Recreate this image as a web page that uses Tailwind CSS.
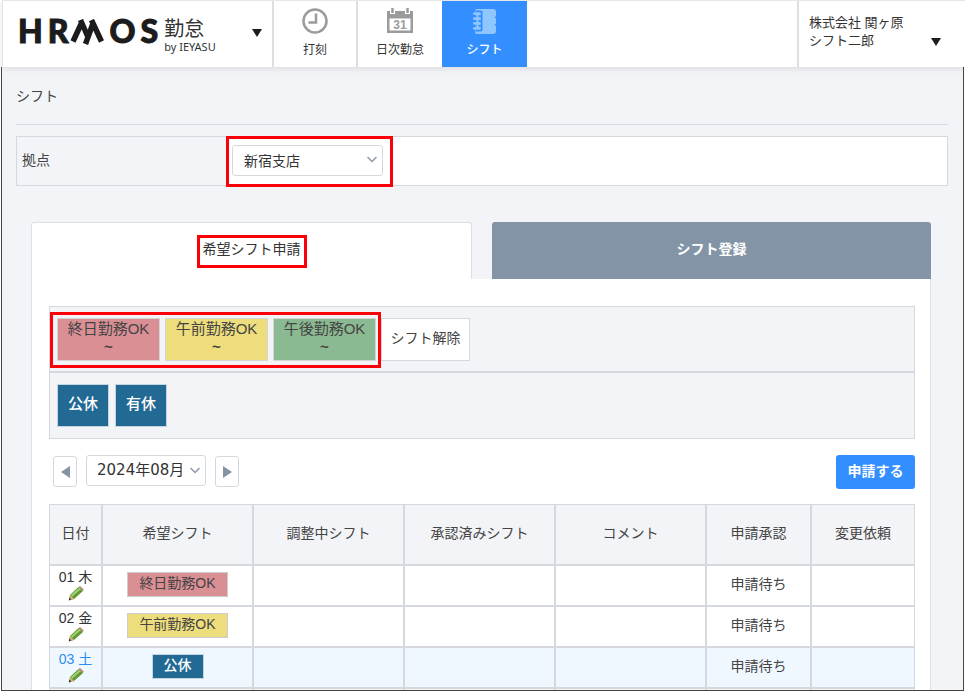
<!DOCTYPE html>
<html lang="ja">
<head>
<meta charset="utf-8">
<title>シフト</title>
<script src="https://cdn.jsdelivr.net/npm/@tailwindcss/browser@4"></script>
</head>
<body class="h-screen flex flex-col overflow-hidden bg-white pb-[2px] text-sm text-[#444] font-['Liberation_Sans','Noto_Sans_CJK_JP',sans-serif]">
<header class="relative z-10 flex h-[67px] shrink-0 ml-[2px] border-t border-l border-[#e6e6ea] bg-white shadow-[0_2px_6px_rgba(0,0,0,0.1)]">
  <div class="flex w-[271px] shrink-0 items-start border-r-2 border-[#dedee4] pl-[15px] pr-[10px]">
    <div class="flex pt-[12px] gap-[5px] text-[32px] leading-[36px] font-black text-[#1c1c1c] font-['Lato',sans-serif] [-webkit-text-stroke:1px_#1c1c1c]">
      <span>H</span><span>R</span>
      <svg class="-ml-[4px] mr-px mt-[6px] h-[26px] w-[34px]" viewBox="0 0 34 26" fill="none" stroke="#1c1c1c" stroke-width="5.500" aria-hidden="true"><path d="M3 22.500 12 3M10.500 1 17.500 17M15.500 25 23.500 3M21.500 1 31.500 22.500"/></svg>
      <span>O</span><span>S</span>
    </div>
    <div class="ml-[6px] pt-[16px] text-[#333] font-['Noto_Sans','Noto_Sans_CJK_JP',sans-serif]">
      <div class="text-[20px] leading-[24px]">勤怠</div>
      <div class="text-[11px] leading-[12px] whitespace-nowrap">by IEYASU</div>
    </div>
    <button class="ml-auto mt-[28px]" aria-label="サービス切替"><svg class="h-[8px] w-[10px]" viewBox="0 0 10 8" fill="#1c1c1c"><path d="M0 0h10L5 8z"/></svg></button>
  </div>
  <nav class="flex flex-1 text-xs leading-[16px] text-[#333]">
    <a href="#" class="flex w-[84px] flex-col items-center gap-[8px] border-r-2 border-[#dedee4] pt-[7px]">
      <svg class="h-[26px] w-[26px]" viewBox="0 0 26 26" fill="none" stroke="#9b9b9b" stroke-width="2.500"><circle cx="13" cy="13" r="11.500"/><path d="M14 5.500v9H6.500"/></svg>打刻</a>
    <a href="#" class="flex w-[84px] flex-col items-center gap-[8px] pt-[7px]">
      <svg class="h-[26px] w-[28px]" viewBox="0 0 28 26"><path d="M1 3h26v22H1z" fill="#9b9b9b"/><path d="M3.500 10.500h21v12h-21z" fill="#fff"/><path d="M6.500 0v6M21.500 0v6" stroke="#fff" stroke-width="5"/><path d="M6.500 0v5M21.500 0v5" stroke="#9b9b9b" stroke-width="2.500"/><text x="14" y="21" text-anchor="middle" font-family="Liberation Sans" font-weight="700" font-size="12" fill="#9b9b9b">31</text></svg>日次勤怠</a>
    <a href="#" class="flex w-[85px] flex-col items-center gap-[8px] bg-[#338fff] pt-[7px] font-medium text-white">
      <svg class="h-[26px] w-[26px]" viewBox="0 0 26 26"><path d="M5 1h16a3 3 0 0 1 3 3v4l-1.500 1.500 1.500 1v5l-1.500 1.500 1.500 1v5a3 3 0 0 1-3 3H5a2 2 0 0 1-2-2V3a2 2 0 0 1 2-2z" fill="#8fc6ff"/><path d="M9.500 3v20M3.500 3.500h6M3.500 22.500h6" fill="none" stroke="#338fff" stroke-width="2"/><path d="M2 8.200h7M2 13h7M2 17.800h7" stroke="#338fff" stroke-width="2"/><path d="M1 5.700h7.500M1 10.700h7.500M1 15.300h7.500M1 20.300h7.500" stroke="#8fc6ff" stroke-width="2.200"/><path d="M5.500 5v16" stroke="#8fc6ff" stroke-width="2"/></svg>シフト</a>
  </nav>
  <button class="flex w-[168px] items-start border-l-2 border-[#dedee4] pl-[10px] pr-[24px] pt-[13px] text-left text-[13px] leading-[18px] text-[#333]">
    <span>株式会社 関ヶ原<br>シフト二郎</span>
    <svg class="ml-auto mt-[24px] h-[8px] w-[10px]" viewBox="0 0 10 8" fill="#1c1c1c"><path d="M0 0h10L5 8z"/></svg>
  </button>
</header>

<main class="mx-px min-h-0 flex-1 overflow-hidden border-x border-b border-[#444] bg-[#f3f4f7] pl-[14px] pr-[15px]">
  <h1 class="flex h-[58px] items-center border-b border-[#d5d8df]">シフト</h1>

  <section class="mt-[11px] flex h-[50px] border border-[#d5d8df] bg-white">
    <label for="branch" class="flex w-[209px] items-center bg-[#f3f4f7] pb-[3px] pl-[5px]">拠点</label>
    <div class="relative -my-px h-[51px] w-[167px] border-[3px] border-[#fb0007] pl-[3px] pt-[6px]">
      <select id="branch" class="h-[31px] w-[151px] appearance-none rounded-[3px] border border-[#d5d8df] bg-white pl-[11px] text-[#333]"><option>新宿支店</option></select>
      <svg class="pointer-events-none absolute right-[13px] top-[17px] h-[7px] w-[10px]" viewBox="0 0 10 7" fill="none" stroke="#8c98a8" stroke-width="1.500"><path d="M.5 1 5 5.500 9.500 1"/></svg>
    </div>
  </section>

  <div class="ml-[15px] mr-[17px] mt-9">
    <div class="flex gap-[20px]">
      <button class="flex h-[57px] flex-1 items-center justify-center rounded-t-[3px] border border-b-0 border-[#dcdfe6] bg-white text-[#333]"><span class="border-[3px] border-[#fb0007] px-[3px] pb-[6px] pt-[2px] leading-[19px]">希望シフト申請</span></button>
      <button class="h-[57px] flex-1 rounded-t-[3px] bg-[#8294a6] pb-[3px] font-bold text-white">シフト登録</button>
    </div>
    <div class="border-x border-[#dcdfe6] bg-white pl-[17px] pr-[15px] pt-[27px]">
      <div class="border border-[#d5d8df] bg-[#f3f4f7]">
        <div class="relative flex gap-[5px] border-b-2 border-[#d5d8df] pb-[10px] pt-[11px] pl-[7px] text-[15px] leading-[18px]">
          <button class="h-[43px] w-[103px] border border-[#d5d5d5] bg-[#da8f95] pb-[4px]">終日勤務OK<br><b>~</b></button>
          <button class="h-[43px] w-[103px] border border-[#d5d5d5] bg-[#eddd7c] pb-[4px]">午前勤務OK<br><b>~</b></button>
          <button class="h-[43px] w-[103px] border border-[#d5d5d5] bg-[#8bba92] pb-[4px]">午後勤務OK<br><b>~</b></button>
          <button class="h-[43px] w-[89px] border border-[#d5d8df] bg-white pb-[3px] text-sm">シフト解除</button>
          <div class="pointer-events-none absolute left-0 top-[5px] h-[56px] w-[331px] border-[3px] border-[#fb0007]"></div>
        </div>
        <div class="flex gap-[6px] pb-[11px] pt-[11px] pl-[7px] text-[15px] font-medium text-white">
          <button class="h-[43px] w-[52px] border border-[#c5d5e0] bg-[#226a94] pb-[3px]">公休</button>
          <button class="h-[43px] w-[52px] border border-[#c5d5e0] bg-[#226a94] pb-[3px]">有休</button>
        </div>
      </div>

      <div class="mt-[16px] flex h-[34px] items-start pl-[4px]">
        <button class="mt-px flex h-[31px] w-[24px] items-center justify-center rounded-[3px] border border-[#d5d8df]" aria-label="前月"><svg class="h-[12px] w-[9px]" viewBox="0 0 9 12" fill="#8294a6"><path d="M9 0v12L0 6z"/></svg></button>
        <div class="relative ml-[9px]">
          <select aria-label="対象月" class="h-[31px] w-[120px] appearance-none rounded-[3px] border border-[#d5d8df] bg-white pl-[10px] text-[15px] text-[#333] font-['DejaVu_Sans','Noto_Sans_CJK_JP',sans-serif]"><option>2024年08月</option></select>
          <svg class="pointer-events-none absolute right-[6px] top-[12px] h-[7px] w-[10px]" viewBox="0 0 10 7" fill="none" stroke="#8c98a8" stroke-width="1.500"><path d="M.5 1 5 5.500 9.500 1"/></svg>
        </div>
        <button class="ml-[9px] mt-px flex h-[31px] w-[24px] items-center justify-center rounded-[3px] border border-[#d5d8df]" aria-label="翌月"><svg class="h-[12px] w-[9px]" viewBox="0 0 9 12" fill="#8294a6"><path d="M0 0v12l9-6z"/></svg></button>
        <button class="ml-auto h-[34px] w-[79px] rounded-[3px] bg-[#338fff] pb-[3px] font-bold text-white">申請する</button>
      </div>

      <table class="mt-[15px] w-full table-fixed border-separate border-spacing-0 text-center [&_td]:border [&_td]:border-[#d5d8df] [&_td]:p-0 [&_td]:pb-[3px] [&_th]:border [&_th]:border-[#d5d8df] [&_th]:p-0 [&_th]:pb-[3px] [&_th]:font-normal">
        <thead><tr class="h-[61px] bg-[#f3f4f7]"><th class="w-[53px]">日付</th><th>希望シフト</th><th>調整中シフト</th><th>承認済みシフト</th><th>コメント</th><th class="w-[105px]">申請承認</th><th class="w-[104px]">変更依頼</th></tr></thead>
        <tbody>
          <tr class="h-[41px]">
            <td class="leading-[18px] text-[#333]">01 木<button class="mx-auto block" aria-label="編集"><svg class="h-[15px] w-[16px]" viewBox="0 0 16 15"><path d="M1 14l1-5L10.500 1l4.500 4L6 13z" fill="#5f9a35"/><path d="M3.500 10 12 2.500" stroke="#a8d070" stroke-width="2"/><path d="M10.500 1l1.500-1 3.800 3.500-1 1.500z" fill="#b08a6a"/><path d="M2 9l4 4-5 1.500z" fill="#d8b080"/><path d="M1.300 11.500l2 2L.8 14.500z" fill="#333"/></svg></button></td>
            <td><span class="inline-block border border-[#ccc] bg-[#da8f95] px-[11px] pb-[2px] leading-[21px]">終日勤務OK</span></td><td></td><td></td><td></td><td>申請待ち</td><td></td>
          </tr>
          <tr class="h-[41px]">
            <td class="leading-[18px] text-[#333]">02 金<button class="mx-auto block" aria-label="編集"><svg class="h-[15px] w-[16px]" viewBox="0 0 16 15"><path d="M1 14l1-5L10.500 1l4.500 4L6 13z" fill="#5f9a35"/><path d="M3.500 10 12 2.500" stroke="#a8d070" stroke-width="2"/><path d="M10.500 1l1.500-1 3.800 3.500-1 1.500z" fill="#b08a6a"/><path d="M2 9l4 4-5 1.500z" fill="#d8b080"/><path d="M1.300 11.500l2 2L.8 14.500z" fill="#333"/></svg></button></td>
            <td><span class="inline-block border border-[#ccc] bg-[#eddd7c] px-[11px] pb-[2px] leading-[21px]">午前勤務OK</span></td><td></td><td></td><td></td><td>申請待ち</td><td></td>
          </tr>
          <tr class="h-[41px] bg-[#f0f8ff]">
            <td class="leading-[18px] text-[#2b8eea]">03 土<button class="mx-auto block" aria-label="編集"><svg class="h-[15px] w-[16px]" viewBox="0 0 16 15"><path d="M1 14l1-5L10.500 1l4.500 4L6 13z" fill="#5f9a35"/><path d="M3.500 10 12 2.500" stroke="#a8d070" stroke-width="2"/><path d="M10.500 1l1.500-1 3.800 3.500-1 1.500z" fill="#b08a6a"/><path d="M2 9l4 4-5 1.500z" fill="#d8b080"/><path d="M1.300 11.500l2 2L.8 14.500z" fill="#333"/></svg></button></td>
            <td><span class="inline-block border border-[#c5d5e0] bg-[#226a94] px-[11px] pb-[2px] leading-[21px] font-medium text-white">公休</span></td><td></td><td></td><td></td><td>申請待ち</td><td></td>
          </tr>
          <tr class="h-[41px] bg-[#fff0f3]"><td></td><td></td><td></td><td></td><td></td><td></td><td></td></tr>
        </tbody>
      </table>
    </div>
  </div>
</main>
</body>
</html>
